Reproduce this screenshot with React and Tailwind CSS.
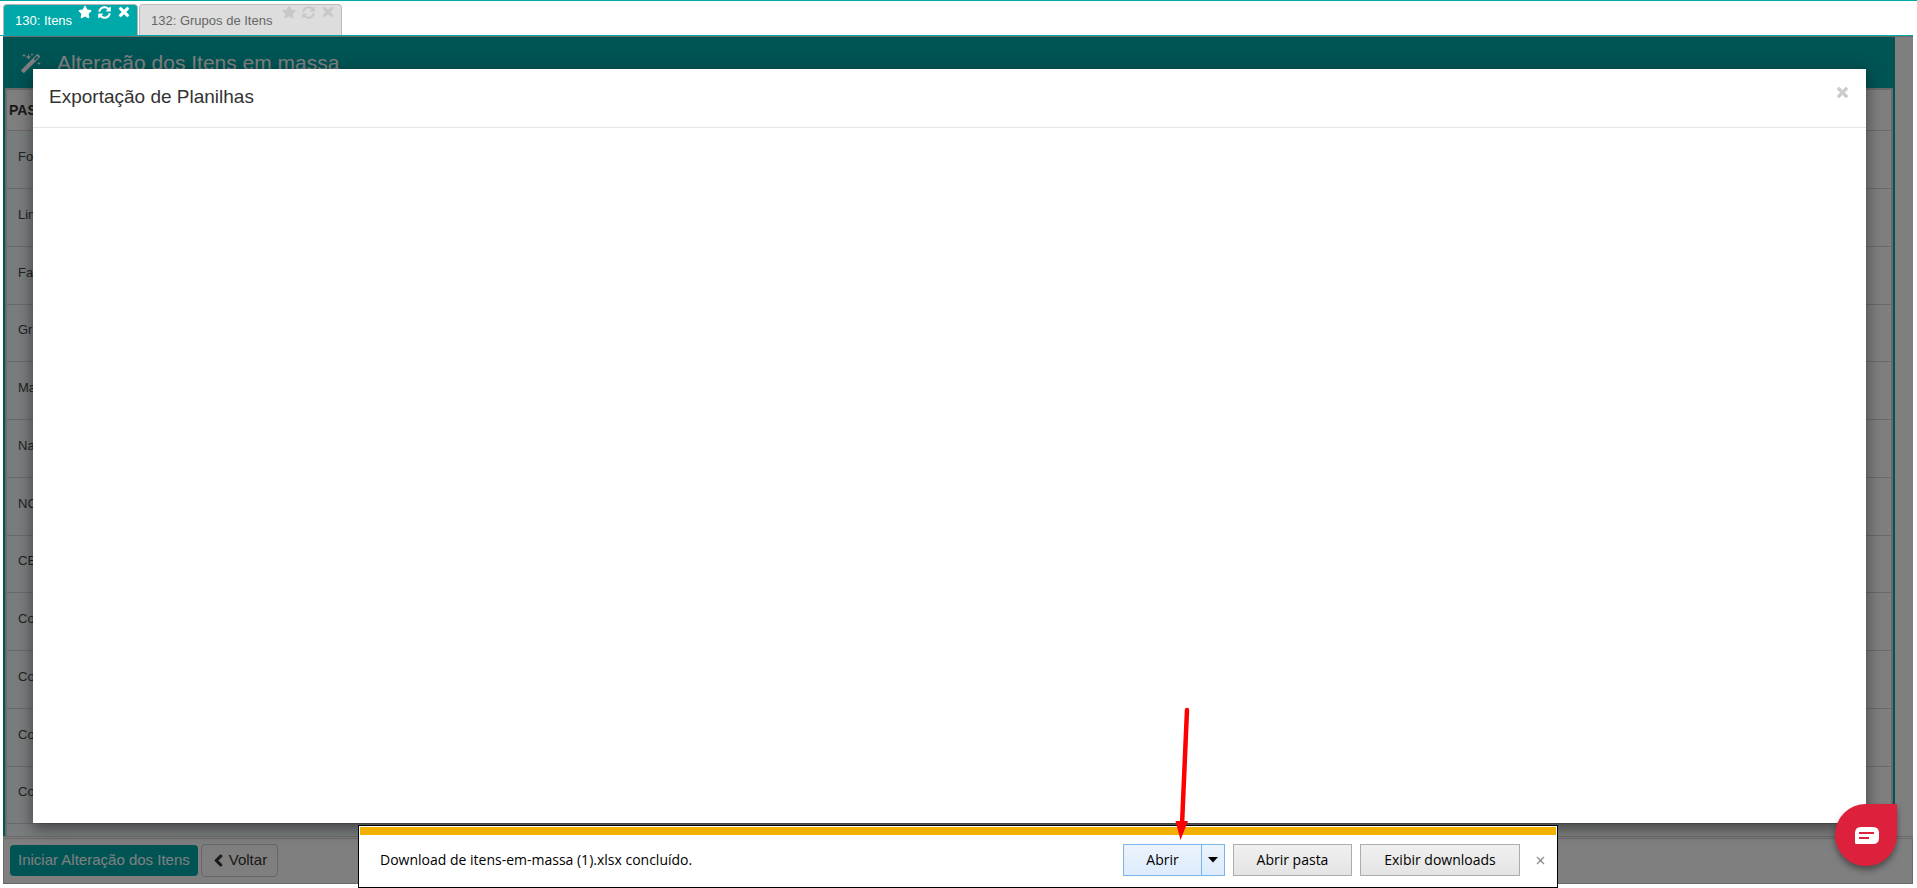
import React from "react";
import { FaStar, FaSyncAlt, FaTimes, FaChevronLeft } from "react-icons/fa";

const fields = [
  "Fornecedor",
  "Linha",
  "Família",
  "Grupo",
  "Marca",
  "Natureza",
  "NCM",
  "CEST",
  "Coleção",
  "Comissão",
  "Comprador",
  "Conta",
  "",
];

function Tab({ label, active }) {
  return (
    <div
      className={
        active
          ? "flex h-[31px] w-[135px] justify-between rounded-t-sm border border-b-0 border-[#b5b5b5] bg-[#00a9a9] pr-1.5 pl-[11px] text-white"
          : "flex h-[31px] w-[203px] justify-between rounded-t-sm border border-b-0 border-[#bbb] bg-[#ddd] pr-1.5 pl-[11px] text-[#666]"
      }
    >
      <a href="#" className="pt-2 text-[13px] leading-4 whitespace-nowrap">
        {label}
      </a>
      <div className={active ? "flex gap-1.5 text-white" : "flex gap-1.5 text-[#c8c8c8]"}>
        <button aria-label="Favorito" className="h-3.5 text-[14px] leading-3.5">
          <FaStar />
        </button>
        <button aria-label="Atualizar" className="h-3.5 text-[13px] leading-3.5">
          <FaSyncAlt />
        </button>
        <button aria-label="Fechar" className="h-3.5 text-[14px] leading-3.5">
          <FaTimes stroke="currentColor" strokeWidth="30" />
        </button>
      </div>
    </div>
  );
}

function WandIcon() {
  return (
    <svg width="20" height="20" viewBox="0 0 20 20" fill="currentColor">
      <path
        fillRule="evenodd"
        d="M.4 16.800 15.900 1.300q.6-.6 1.200 0l1.700 1.700q.6.6 0 1.200L3.300 19.700q-.6.6-1.200 0L.4 18q-.6-.6 0-1.200zM12.800 6.100l1.300 1.300 3.300-3.500-1.200-1.200z"
      />
      <path d="M3 .5l.5 1.500 1.500.5-1.500.5L3 4.500 2.500 3 1 2.500 2.500 2zM7.500 1l.8 2.200 2.200.8-2.200.8L7.500 7l-.8-2.200L4.500 4l2.200-.8zM11 0l.4 1.100 1.100.4-1.100.4L11 3l-.4-1.100-1.100-.4 1.100-.4zM18 8.500l.5 1.500 1.500.5-1.500.5-.5 1.500-.5-1.500-1.500-.5 1.500-.5z" />
    </svg>
  );
}

function FieldsTable() {
  return (
    <table className="w-full border-separate border-spacing-0 border-2 border-[#d4d4d4] text-left">
      <thead>
        <tr className="h-[41px] bg-white">
          <th className="border-b border-[#d4d4d4] px-0.5 text-sm font-bold text-[#333]">PASSO</th>
        </tr>
      </thead>
      <tbody>
        {fields.map((field) => (
          <tr key={field} className="h-[58px] bg-linear-to-r from-[#f3fbfd] to-white nth-[4n]:h-[57px]">
            <td className="border-b border-[#d4d4d4] px-[11px] pb-1.5 text-[13px] text-[#444]">
              {field}
            </td>
          </tr>
        ))}
      </tbody>
    </table>
  );
}

function Modal() {
  return (
    <div className="absolute inset-0 flex bg-black/50 pt-[33px] pr-[47px] pb-[61px] pl-[30px]">
      <div
        role="dialog"
        aria-labelledby="modal-title"
        className="flex-1 bg-white shadow-[0_5px_15px_rgba(0,0,0,0.5)]"
      >
        <div className="flex h-[59px] items-start justify-between border-b border-[#e5e5e5] px-4 pt-4">
          <h4 id="modal-title" className="text-[19px] leading-6 text-[#333]">
            Exportação de Planilhas
          </h4>
          <button aria-label="Fechar" className="text-[15px] leading-4 text-[#ccc]">
            <FaTimes stroke="currentColor" strokeWidth="30" />
          </button>
        </div>
      </div>
    </div>
  );
}

function Arrow() {
  return (
    <svg
      className="absolute right-[363px] bottom-[46px]"
      width="20"
      height="134"
      viewBox="0 0 20 134"
    >
      <path d="M13 3 8 118" stroke="#f00" strokeWidth="4.500" strokeLinecap="round" />
      <path d="M1.500 114h12.500L6.500 133z" fill="#f00" />
    </svg>
  );
}

function DownloadBar() {
  const grayButton =
    "h-8 border border-[#acacac] bg-linear-to-b from-[#f0f0f0] to-[#e4e4e4] text-center";
  return (
    <div className="absolute right-[359px] bottom-0 left-[358px] h-[63px] border border-black bg-white p-px font-['Open_Sans','Noto_Sans',sans-serif] text-sm text-black">
      <div className="h-2 bg-[#f2b100]" />
      <div className="flex items-center pt-[9px] pr-[11px] pl-5">
        <p className="flex-1">Download de itens-em-massa (1).xlsx concluído.</p>
        <div className="mr-2 flex h-8 border border-[#7eb4ea] bg-linear-to-b from-[#ecf4fc] to-[#dcebfc]">
          <button className="w-[77px]">Abrir</button>
          <button
            aria-label="Mais opções"
            className="flex w-[23px] items-center justify-center border-l border-[#7eb4ea]"
          >
            <svg width="10" height="6" viewBox="0 0 10 6">
              <path d="M0 0h10L5 5.500z" />
            </svg>
          </button>
        </div>
        <button className={grayButton + " mr-2 w-[119px]"}>Abrir pasta</button>
        <button className={grayButton + " mr-4 w-40"}>Exibir downloads</button>
        <button aria-label="Fechar barra" className="text-[#999]">
          <svg width="9" height="9" viewBox="0 0 9 9" fill="none" stroke="currentColor">
            <path d="M1 1l7 7M8 1 1 8" strokeWidth="1.500" />
            <path d="M3 4.500h3" strokeWidth="3" />
          </svg>
        </button>
      </div>
      <Arrow />
    </div>
  );
}

function ChatButton() {
  return (
    <button
      aria-label="Chat"
      className="absolute right-5 bottom-[22px] flex size-[62px] items-center justify-center rounded-full rounded-tr-md bg-[#dd213c] pl-0.5 shadow-[0_4px_6px_rgba(0,0,0,0.4)]"
    >
      <svg width="24" height="17" viewBox="0 0 24 17">
        <path d="M6 0h12q6 0 6 6v5q0 6-6 6H1.500Q0 17 0 15.500V6q0-6 6-6z" fill="#fff" />
        <path d="M4 6h15M4 11h10" stroke="#dd213c" strokeWidth="2" />
      </svg>
    </button>
  );
}

export default function App() {
  return (
    <div className="relative flex h-screen flex-col overflow-hidden bg-white font-['Liberation_Sans',Arial,sans-serif]">
      <nav className="mr-1 flex h-9 shrink-0 items-end gap-px border-b border-[#00a9a9] pl-[3px]">
        <Tab label="130: Itens" active />
        <Tab label="132: Grupos de Itens" />
      </nav>
      <div className="absolute inset-x-0 top-0 h-px bg-[#00a9a9]" />

      <div className="relative mr-1 mb-1 ml-[3px] flex min-h-0 flex-1 flex-col">
        <main className="mb-px min-h-0 flex-1 overflow-hidden border-t border-b border-[#d4d4d4] pr-[18px]">
          <div className="bg-[#00a9a9] px-0.5">
            <h1 className="flex h-[51px] items-center gap-4 pl-4 text-[21px] text-white">
              <WandIcon />
              Alteração dos Itens em massa
            </h1>
            <FieldsTable />
          </div>
        </main>
        <footer className="flex h-[46px] items-center gap-[3px] border border-[#d4d4d4] pb-0.5 pl-1.5 text-[15px]">
          <button className="h-[31px] rounded-sm bg-[#00a9a9] px-2 text-white">
            Iniciar Alteração dos Itens
          </button>
          <button className="flex h-[33px] items-center gap-1 rounded-sm border border-[#ccc] px-2.5 text-[#333]">
            <FaChevronLeft className="text-[13px]" stroke="currentColor" strokeWidth="40" />
            Voltar
          </button>
        </footer>
        <Modal />
      </div>

      <DownloadBar />
      <ChatButton />
    </div>
  );
}
